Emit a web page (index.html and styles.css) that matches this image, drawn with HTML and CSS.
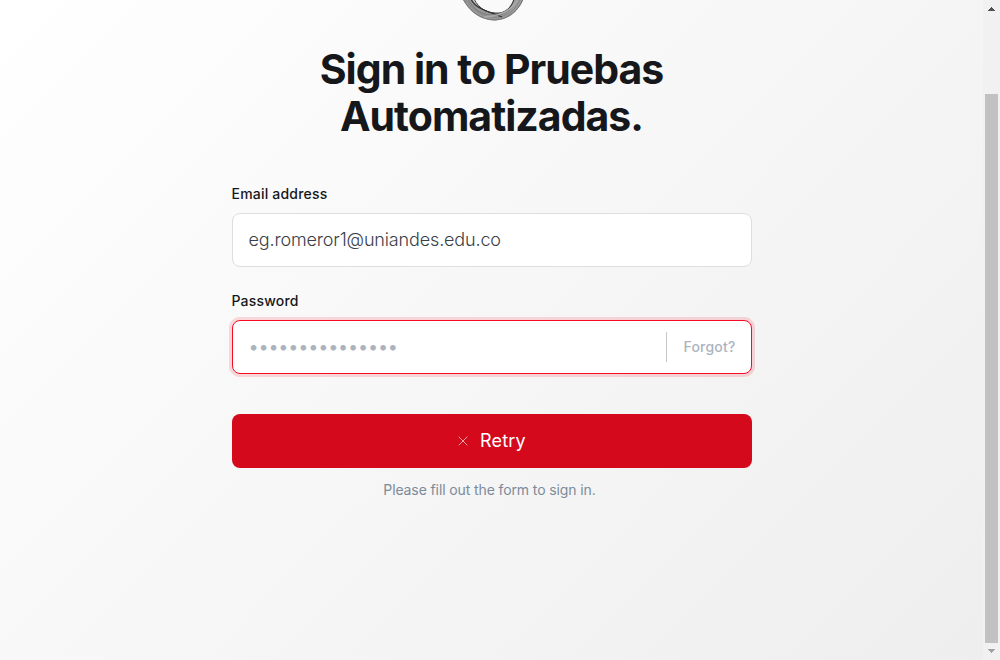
FILE: index.html
```html
<!DOCTYPE html>
<html lang="en">
<head>
<meta charset="utf-8">
<title>Sign in</title>
<link rel="stylesheet" href="styles.css">
</head>
<body>
<main class="page">
  <form class="signin">
    <svg class="logo" width="70" height="22" viewBox="458 0 70 22" fill="none">
      <path d="M462 -2C468 10 479 20.500 495 20.500C509 20 519 11 524 -2H514C511 6 507 11.500 499 13C487 12.500 477 8 472 -2Z" fill="#999"/>
      <path d="M463 -1C470 12 482 20 495 20C509 19 519 10 523 -1" stroke="#777"/>
      <path d="M465 -1C474 12 486 19 499 17C510 15 517 8 520 -1" stroke="#888"/>
      <path d="M471 -1C475 9 490 12 502 17" stroke="#333" stroke-width="1.200"/>
      <path d="M468 -1C475 13 486 16 499 15C508 13 514 7 517 -1" stroke="#777"/>
      <path d="M474 -1C479 9 488 14 500 13C508 11 512 6 514 -1" stroke="#333"/>
      <path d="M484 17C500 16 512 11 518 -1" stroke="#aaa" stroke-width="1.500"/>
    </svg>
    <h1 class="title">Sign in to Pruebas<br>Automatizadas.</h1>
    <label class="label">Email address</label>
    <div class="field field-email">eg.romeror1@uniandes.edu.co</div>
    <label class="label">Password</label>
    <div class="field field-error">
      <span class="dots">•••••••••••••••</span>
      <a class="forgot">Forgot?</a>
    </div>
    <button class="retry" type="button">
      <svg class="cross" width="10" height="10" viewBox="0 0 10 10"><path d="M.7 .7L9.300 9.300M9.300 .7L.7 9.300" fill="none" stroke="currentColor"/></svg>
      <span class="retry-text">Retry</span>
    </button>
    <p class="hint">Please fill out the form to sign in.</p>
  </form>
</main>
<aside class="scrollbar">
  <svg class="arrow" width="7" height="4" viewBox="0 0 7 4" shape-rendering="crispEdges"><path d="M3 0h1v1h1v1h1v1h1v1H0V3h1V2h1V1h1z" fill="#505050"/></svg>
  <div class="thumb"></div>
  <svg class="arrow" width="7" height="4" viewBox="0 0 7 4" shape-rendering="crispEdges"><path d="M0 0h7v1H6v1H5v1H4v1H3V3H2V2H1V1H0z" fill="#a3a3a3"/></svg>
</aside>
</body>
</html>
```
FILE: styles.css
```css
* { box-sizing: border-box; }
body {
  margin: 0;
  height: 660px;
  display: flex;
  overflow: hidden;
  font-family: Inter, sans-serif;
  color: #15171a;
}
.page {
  flex: 1;
  display: flex;
  justify-content: center;
  background: linear-gradient(315deg, #eee 0%, #fff 100%);
}
.signin {
  width: 520px;
  display: flex;
  flex-direction: column;
}
.logo { align-self: center; margin-left: 3px; }
.title {
  margin: 24px 0 44px;
  text-align: center;
  font-size: 41px;
  line-height: 47px;
  font-weight: 700;
  letter-spacing: -0.98px;
}
.label {
  height: 21px;
  margin-bottom: 8px;
  font-size: 14px;
  line-height: 20px;
  font-weight: 500;
  letter-spacing: 0.2px;
}
.field {
  height: 54px;
  display: flex;
  align-items: center;
  padding: 0 16px;
  border: 1px solid #dddedf;
  border-radius: 8px;
  background: #fff;
  font-size: 18px;
  font-weight: 300;
  color: #394047;
}
.field-email {
  margin-bottom: 24px;
  padding-bottom: 2px;
  letter-spacing: -0.15px;
}
.field-error {
  justify-content: space-between;
  padding-right: 15px;
  border-color: #f50b23;
  box-shadow: 0 0 0 3px rgba(245, 11, 35, 0.15);
}
.dots {
  padding-bottom: 2px;
  color: #abb4be;
  font-weight: 400;
  letter-spacing: -0.17px;
}
.forgot {
  height: 30px;
  padding-left: 16px;
  border-left: 1px solid #c5c7c9;
  font-size: 14px;
  line-height: 29px;
  font-weight: 500;
  letter-spacing: 0.2px;
  color: #abb4be;
}
.retry {
  height: 54px;
  margin-top: 40px;
  display: flex;
  align-items: center;
  justify-content: center;
  gap: 12px;
  padding: 0 0 0 1px;
  border: 0;
  border-radius: 8px;
  background: #d5091c;
  color: #fff;
  font: 400 18px Inter, sans-serif;
  letter-spacing: 0.2px;
}
.retry-text { padding-bottom: 1px; }
.cross { color: #f0a0a8; }
.hint {
  margin: 12px 4px 0 0;
  text-align: center;
  font-size: 14px;
  line-height: 20px;
  letter-spacing: -0.11px;
  color: #7c8b9a;
}
.scrollbar {
  width: 17px;
  padding: 7px 2px 7px;
  display: flex;
  flex-direction: column;
  align-items: center;
  background: #f1f1f1;
}
.thumb {
  width: 13px;
  height: 549px;
  margin: 83px 0 6px;
  background: #c1c1c1;
}
```
